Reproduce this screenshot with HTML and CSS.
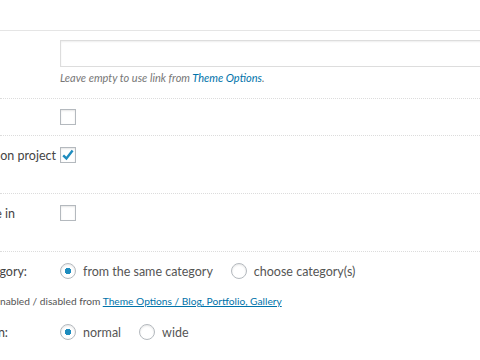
FILE: index.html
```html
<!DOCTYPE html>
<html lang="en">
  <head>
    <meta charset="UTF-8" />
    <title>Project Options</title>
    <link rel="stylesheet" href="styles.css">
  </head>
  <body>
    <div class="options">
      <!-- Custom link -->
      <div class="row row-link">
        <div class="label"></div>
        <div class="field">
          <input type="text" class="text-input" />
          <p class="hint">
            Leave empty to use link from <a href="#">Theme Options</a>.
          </p>
        </div>
      </div>

      <div class="row row-check">
        <div class="label"></div>
        <div class="field">
          <span class="checkbox"></span>
        </div>
      </div>

      <div class="row row-tall">
        <div class="label"><span class="pad-4">Show navigation on project</span></div>
        <div class="field">
          <span class="checkbox">
            <svg viewBox="0 0 16 16" width="16" height="16">
              <path d="M3.2 8.4 L6.4 11.4 L12.6 3.6" fill="none" stroke="#1e8cbe" stroke-width="2.4" />
            </svg>
          </span>
        </div>
      </div>

      <div class="row row-tall">
        <div class="label"><span class="pad-45">Hide in</span></div>
        <div class="field">
          <span class="checkbox"></span>
        </div>
      </div>

      <div class="row row-radio row-first">
        <div class="label"><span class="pad-33">Related from category:</span></div>
        <div class="field radios">
          <label class="radio checked">from the same category</label>
          <label class="radio">choose category(s)</label>
        </div>
      </div>

      <p class="note">
        nabled / disabled from
        <a href="#">Theme Options / Blog, Portfolio, Gallery</a>
      </p>

      <div class="row row-radio">
        <div class="label"><span class="pad-52">Content width in column:</span></div>
        <div class="field radios">
          <label class="radio checked">normal</label>
          <label class="radio">wide</label>
        </div>
      </div>
    </div>
  </body>
</html>
```

FILE: styles.css
```css
/* General Styles */
body {
  margin: 0;
  background: #fff;
  font-family: "Lato", "Open Sans", sans-serif;
  font-size: 12.5px;
  color: #444;
  overflow: hidden;
}

a {
  color: #0073aa;
}

.options {
  margin-top: 30px;
  border-top: 1px solid #e5e5e5;
}

/* Rows */
.row {
  display: grid;
  grid-template-columns: 60px 1fr;
  border-bottom: 1px dotted #dcdcdc;
}

.label {
  display: flex;
  justify-content: flex-end;
  white-space: nowrap;
  color: #444;
}

.pad-4 { padding-right: 4px; }
.pad-33 { padding-right: 33px; }
.pad-45 { padding-right: 45px; }
.pad-52 { padding-right: 52px; }

.row-link {
  height: 68px;
  padding-top: 9px;
  box-sizing: border-box;
}

.text-input {
  display: block;
  width: 440px;
  height: 27px;
  margin: 0;
  border: 1px solid #ddd;
  box-shadow: inset 0 1px 2px rgba(0, 0, 0, 0.07);
  box-sizing: border-box;
}

.hint {
  margin: 4px 0 0;
  font-size: 11px;
  font-style: italic;
  color: #777;
}

.hint a {
  text-decoration: none;
}

.row-check {
  height: 37px;
  padding-top: 10px;
  box-sizing: border-box;
}

.row-tall {
  height: 58px;
  padding-top: 11px;
  box-sizing: border-box;
}

.row-tall .label {
  align-items: flex-start;
  line-height: 18px;
}

/* Checkbox */
.checkbox {
  display: block;
  width: 16px;
  height: 16px;
  border: 1px solid #b4b9be;
  box-sizing: border-box;
  box-shadow: inset 0 1px 2px rgba(0, 0, 0, 0.1);
  background: #fff;
}

.checkbox svg {
  display: block;
  margin: -1px;
}

/* Radios */
.row-radio {
  border-bottom: none;
  height: 28px;
  align-items: center;
}

.row-first {
  margin-top: 5px;
}

.radios {
  display: flex;
  align-items: center;
  gap: 18px;
}

.radio {
  display: flex;
  align-items: center;
  gap: 7px;
  color: #555;
}

.radio::before {
  content: "";
  width: 16px;
  height: 16px;
  border: 1px solid #b4b9be;
  border-radius: 50%;
  box-sizing: border-box;
  box-shadow: inset 0 1px 2px rgba(0, 0, 0, 0.1);
  background: #fff;
}

.radio.checked::before {
  background: radial-gradient(circle, #1e8cbe 0 3px, #fff 3.5px);
}

.note {
  margin: 10px 0 11px;
  font-size: 10.2px;
  color: #555;
}
```
